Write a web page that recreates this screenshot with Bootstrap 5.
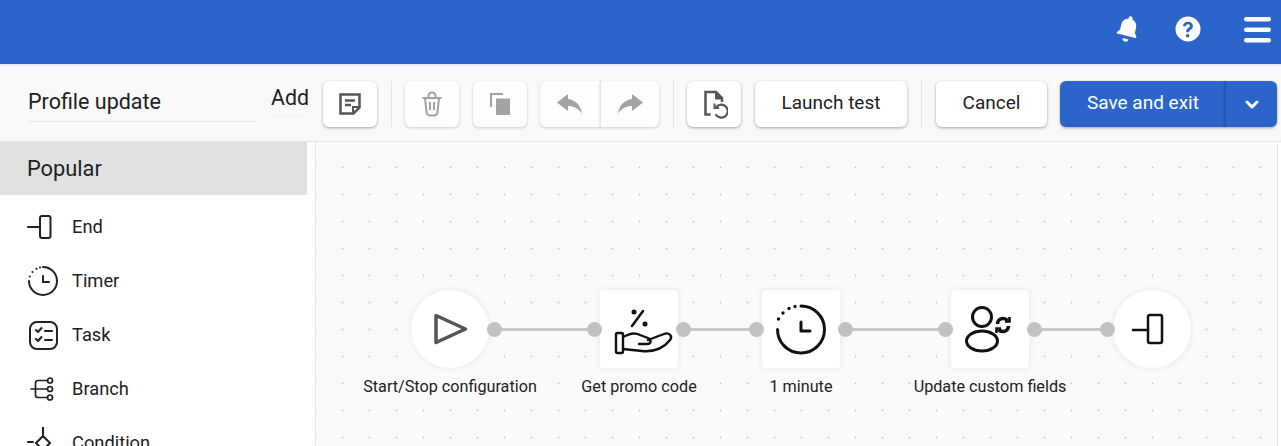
<!doctype html>
<html lang="en">
<head>
    <meta charset="utf-8" />
    <meta content="width=device-width, initial-scale=1" name="viewport" />
    <title>Profile update</title>
    <link href="https://cdn.jsdelivr.net/npm/bootstrap@5.3.0/dist/css/bootstrap.min.css" rel="stylesheet" />
    <style>
        html, body {
            height: 446px;
            overflow: hidden;
        }

        body {
            font-family: Roboto, "Liberation Sans", sans-serif;
            color: #212121;
            background-color: #fff;
        }

        .top-bar {
            height: 66px;
            padding: 0 10px 6px 0;
            background-color: #2b65cb;
            border-bottom: 2px solid #e4edf9;
        }

        .top-icon {
            display: block;
            fill: #fff;
        }

        .bell-icon { margin-right: 34px; }
        .help-icon { margin-right: 43px; }

        .tool-bar {
            height: 76px;
            padding: 15px 4px 14px 28px;
            background-color: #f9f9f9;
            border-bottom: 1px solid #e6e6e6;
        }

        .title-field {
            width: 228px;
            height: 41px;
            margin-right: 15px;
            padding-top: 7px;
            font-size: 21.5px;
            line-height: 28px;
            border-bottom: 1px solid #e8e8e8;
        }

        .add-field {
            width: 37px;
            height: 36px;
            margin-right: 15px;
            font-size: 21.3px;
            line-height: 34px;
            border-bottom: 1px solid #efefef;
        }

        .tool-btn {
            --bs-btn-disabled-border-color: #e6e6e6;
            height: 46px;
            padding: 0 0 1px;
            font-size: 19px;
            color: #212121;
            background-color: #fff;
            border: 0;
            border-radius: 6px;
            box-shadow: 0 1px 3px rgba(0, 0, 0, .35);
            display: flex;
            align-items: center;
            justify-content: center;
        }

        .tool-btn:disabled {
            opacity: 1;
            background-color: #fdfdfd;
            box-shadow: 0 1px 3px rgba(0, 0, 0, .18);
        }

        .icon-btn { width: 54px; padding: 0; }
        .undo-btn { width: 60px; padding: 0; border-radius: 6px 0 0 6px; }
        .redo-btn { width: 59px; padding: 0; border-radius: 0 6px 6px 0; border-left: 1px solid #e6e6e6; }
        .launch-btn { width: 152px; }
        .cancel-btn { width: 111px; }

        .save-btn {
            height: 46px;
            font-size: 19px;
            color: #fff;
            background-color: #2b65cb;
            border: 0;
            box-shadow: 0 1px 3px rgba(0, 0, 0, .35);
        }

        .save-main { width: 166px; padding: 0 0 1px; border-radius: 6px 0 0 6px; }
        .save-arrow { width: 52px; padding: 0; border-radius: 0 6px 6px 0; border-left: 1px solid #2257b3; }

        .tool-gap {
            width: 1px;
            height: 46px;
            background-color: #e4e4e4;
        }

        .gap-14 { margin-right: 14px; }
        .gap-13 { margin-right: 13px; }

        .work-area {
            height: 304px;
        }

        .side-panel {
            width: 316px;
            flex: none;
            padding-right: 8px;
            border-right: 1px solid #e6e6e6;
            overflow: hidden;
        }

        .side-title {
            height: 53px;
            padding-left: 27px;
            font-size: 21.8px;
            line-height: 53px;
            background-color: #e1e1e1;
        }

        .side-list {
            padding-top: 5px;
        }

        .side-item {
            height: 54px;
            padding: 0 0 0 27px;
            font-size: 18.3px;
            color: #212121;
            border: 0;
            background: transparent;
        }

        .side-icon {
            width: 32px;
            height: 32px;
            margin-right: 13px;
            flex: none;
        }

        .flow-canvas {
            position: relative;
            width: 962px;
            background-color: #fafafa;
            background-image: radial-gradient(circle, #bdbdbd .7px, transparent 1.1px);
            background-size: 27px 27px;
            background-position: 13px 12px;
            border-right: 1px solid #e6e6e6;
        }

        .flow-step {
            position: absolute;
            top: 148px;
            width: 78px;
        }

        .step-start { left: 95px; }
        .step-promo { left: 284px; }
        .step-timer { left: 446px; }
        .step-update { left: 635px; }
        .step-end { left: 797px; }

        .step-box {
            width: 78px;
            height: 78px;
            background-color: #fff;
            border-radius: 4px;
            box-shadow: 0 0 4px 2px #efefef;
        }

        .step-round { border-radius: 50%; }

        .step-label {
            margin-top: 9px;
            padding: 0 2px;
            font-size: 16.2px;
            line-height: 20px;
            white-space: nowrap;
            background-color: #fafafa;
        }

        .flow-port {
            position: absolute;
            top: 180px;
            width: 15px;
            height: 15px;
            border-radius: 50%;
            background-color: #c2c2c2;
        }

        .port-a { left: 171px; }
        .port-b { left: 271px; }
        .port-c { left: 360px; }
        .port-d { left: 433px; }
        .port-e { left: 522px; }
        .port-f { left: 622px; }
        .port-g { left: 711px; }
        .port-h { left: 784px; }

        .flow-link {
            position: absolute;
            top: 186px;
            height: 3px;
            background-color: #c9c9c9;
        }

        .link-a { left: 180px; width: 96px; }
        .link-b { left: 369px; width: 70px; }
        .link-c { left: 531px; width: 96px; }
        .link-d { left: 720px; width: 70px; }
    </style>
</head>
<body>

<nav class="top-bar d-flex align-items-center justify-content-end">
    <svg class="top-icon bell-icon" width="26" height="28" viewBox="0 0 26 28">
        <path transform="rotate(14 13 14)" d="M13 1c1.200 0 2 .9 2 2v.8c3.600 1 5.600 4 5.600 7.600v4.800l2.400 3.300c.4.600 0 1.500-.8 1.500H3.800c-.8 0-1.200-.9-.8-1.500l2.400-3.300v-4.800c0-3.600 2-6.600 5.600-7.600V3c0-1.100.8-2 2-2zM10 24h6c0 1.700-1.300 3-3 3s-3-1.300-3-3z"/>
    </svg>
    <svg class="top-icon help-icon" width="26" height="26" viewBox="0 0 26 26">
        <path fill-rule="evenodd" d="M13 .5a12.500 12.500 0 1 0 0 25 12.500 12.500 0 0 0 0-25zm-.1 5.200c3 0 5 1.700 5 4.200 0 2.100-1.200 3-2.400 3.800-1 .7-1.400 1.100-1.400 2.100v.5h-2.900v-.8c0-1.800.8-2.700 2-3.500 1-.7 1.700-1.200 1.700-2.200s-.7-1.600-1.900-1.600c-1.300 0-2 .8-2.100 2H8c.1-2.800 2-4.500 4.900-4.500zM12.600 18a1.800 1.800 0 1 1 0 3.600 1.800 1.800 0 0 1 0-3.600z"/>
    </svg>
    <svg class="top-icon" width="27" height="28" viewBox="0 0 27 28">
        <rect y="2" width="27" height="4.500" rx="2.200"/>
        <rect y="12.500" width="27" height="4.500" rx="2.200"/>
        <rect y="23" width="27" height="4.500" rx="2.200"/>
    </svg>
</nav>

<div class="tool-bar d-flex align-items-start">
    <div class="title-field">Profile update</div>
    <div class="add-field">Add</div>
    <button class="btn tool-btn icon-btn gap-14" type="button">
        <svg width="24" height="24" viewBox="0 0 24 24" fill="none" stroke="#555" stroke-width="2.500">
            <path d="M2.500 2.500h19v13l-6 6h-13z"/>
            <path d="M7 8.500h10M7 13h6"/>
            <path d="M15 21v-6h6" stroke-width="2"/>
        </svg>
    </button>
    <span class="tool-gap gap-13"></span>
    <button class="btn tool-btn icon-btn gap-14" type="button" disabled>
        <svg width="22" height="26" viewBox="0 0 22 26" fill="none" stroke="#a3a3a3" stroke-width="2">
            <path d="M1.500 7h19M4 7l1.500 14c.2 2 1.500 3.500 3.500 3.500h4c2 0 3.300-1.500 3.500-3.500L18 7"/>
            <path d="M7.500 7V4.500c0-1.500 1.500-3 3.500-3s3.500 1.500 3.500 3V7"/>
            <path d="M9 11v8M13 11v8"/>
        </svg>
    </button>
    <button class="btn tool-btn icon-btn gap-13" type="button" disabled>
        <svg width="20" height="22" viewBox="0 0 20 22">
            <path fill="#a3a3a3" d="M6 5.500h14V22H6z"/>
            <path fill="none" stroke="#a3a3a3" stroke-width="2" d="M1 14V1h12"/>
        </svg>
    </button>
    <div class="d-flex gap-14">
        <button class="btn tool-btn undo-btn" type="button" disabled>
            <svg width="26" height="20" viewBox="0 0 26 20">
                <path fill="#a3a3a3" d="M11 0 0 8.500 11 17v-5c6 0 10.500 2.500 14 7.500C24 12 19 6 11 5z"/>
            </svg>
        </button>
        <button class="btn tool-btn redo-btn" type="button" disabled>
            <svg width="26" height="20" viewBox="0 0 26 20">
                <path fill="#a3a3a3" d="M15 0l11 8.500L15 17v-5C9 12 4.500 14.500 1 19.500 2 12 7 6 15 5z"/>
            </svg>
        </button>
    </div>
    <span class="tool-gap gap-13"></span>
    <button class="btn tool-btn icon-btn gap-14" type="button">
        <svg width="28" height="30" viewBox="0 0 28 30" fill="none" stroke="#555" stroke-width="2.500">
            <g transform="translate(2 1)">
                <path d="M8.500 24.500H3.500V2h10.500l6 6v4"/>
                <path d="M13.500 2v7h6.500z" fill="#555" stroke-width="1"/>
                <path d="M14 17.200a6.500 6.500 0 1 1-.5 7" stroke-width="2.200"/>
                <path d="M12.500 13.500v4.500h4.500" stroke-width="2"/>
            </g>
        </svg>
    </button>
    <button class="btn tool-btn launch-btn gap-14" type="button">Launch test</button>
    <span class="tool-gap gap-14"></span>
    <button class="btn tool-btn cancel-btn gap-13" type="button">Cancel</button>
    <div class="btn-group">
        <button class="btn save-btn save-main" type="button">Save and exit</button>
        <button class="btn save-btn save-arrow" type="button">
            <svg width="14" height="10" viewBox="0 0 14 10" fill="none" stroke="#fff" stroke-width="3" stroke-linecap="round" stroke-linejoin="round">
                <path d="M2 2l5 5 5-5"/>
            </svg>
        </button>
    </div>
</div>

<div class="work-area d-flex">
    <aside class="side-panel">
        <div class="side-title">Popular</div>
        <div class="list-group list-group-flush side-list">
            <div class="list-group-item side-item d-flex align-items-center">
                <svg class="side-icon" viewBox="0 0 32 32" fill="none" stroke="#212121" stroke-width="2" stroke-linecap="round">
                    <path d="M1 16h12"/>
                    <rect x="13" y="5" width="10.500" height="22" rx="2"/>
                </svg>
                End
            </div>
            <div class="list-group-item side-item d-flex align-items-center">
                <svg class="side-icon" viewBox="0 0 32 32" fill="none" stroke="#212121" stroke-width="2" stroke-linecap="round">
                    <path d="M16 2a14 14 0 1 1-14 14"/>
                    <path d="M2.800 11.500v0M5.500 7v0M9.500 3.800v0M13 2.500v0" stroke-width="2.200"/>
                    <path d="M16 11v6h6"/>
                </svg>
                Timer
            </div>
            <div class="list-group-item side-item d-flex align-items-center">
                <svg class="side-icon" viewBox="0 0 32 32" fill="none" stroke="#212121" stroke-width="2" stroke-linecap="round" stroke-linejoin="round">
                    <rect x="3" y="3" width="27" height="27" rx="7"/>
                    <path d="M9 11l2 2 3.500-4M9 20l2 2 3.500-4M18 12h7M18 21h7"/>
                </svg>
                Task
            </div>
            <div class="list-group-item side-item d-flex align-items-center">
                <svg class="side-icon" viewBox="0 0 32 32" fill="none" stroke="#212121" stroke-width="1.700" stroke-linecap="round">
                    <path d="M4 16h16M20.500 7.500h-9.500c-1.500 0-2.500 1-2.500 2.500v12c0 1.500 1 2.500 2.500 2.500h9.500"/>
                    <circle cx="23" cy="7.500" r="2.500"/>
                    <circle cx="23" cy="16" r="2.500"/>
                    <circle cx="23" cy="24.500" r="2.500"/>
                </svg>
                Branch
            </div>
            <div class="list-group-item side-item d-flex align-items-center">
                <svg class="side-icon" viewBox="0 0 32 32" fill="none" stroke="#212121" stroke-width="2" stroke-linecap="round" stroke-linejoin="round">
                    <path d="M16 0v9M16 9l7 7-7 7-7-7zM1 15h5"/>
                </svg>
                Condition
            </div>
        </div>
    </aside>

    <main class="flow-canvas flex-grow-0">
        <span class="flow-link link-a"></span>
        <span class="flow-link link-b"></span>
        <span class="flow-link link-c"></span>
        <span class="flow-link link-d"></span>

        <div class="flow-step step-start d-flex flex-column align-items-center">
            <div class="step-box step-round">
                <svg width="78" height="78" viewBox="0 0 78 78" fill="none" stroke="#555" stroke-width="3.500" stroke-linejoin="round">
                    <path d="M25 25.500 54.500 39 25 52.500z"/>
                </svg>
            </div>
            <div class="step-label">Start/Stop configuration</div>
        </div>

        <div class="flow-step step-promo d-flex flex-column align-items-center">
            <div class="step-box">
                <svg width="78" height="78" viewBox="0 0 78 78" fill="none" stroke="#111" stroke-width="2.400" stroke-linecap="round" stroke-linejoin="round">
                    <circle cx="34" cy="22" r="2.500" fill="#111" stroke="none"/>
                    <circle cx="45" cy="34" r="2.500" fill="#111" stroke="none"/>
                    <path d="M32 36 43 21" stroke-width="2.500"/>
                    <rect x="16" y="43" width="7" height="20" rx="1.500"/>
                    <path d="M23 47c6-3 11-5 17-2l8 3c4 2 3 6-1 6h-8"/>
                    <path d="M48 50l16-6c5-2 9 2 6 6-7 9-17 12-28 11l-19-2"/>
                </svg>
            </div>
            <div class="step-label">Get promo code</div>
        </div>

        <div class="flow-step step-timer d-flex flex-column align-items-center">
            <div class="step-box">
                <svg width="78" height="78" viewBox="0 0 78 78" fill="none" stroke="#111" stroke-width="3" stroke-linecap="round" stroke-linejoin="round">
                    <path d="M39 16a23.500 23.500 0 1 1-23.500 23.500"/>
                    <path d="M16.500 29v0M21 23v0M27 18.500v0M33 16.500v0" stroke-width="3.400"/>
                    <path d="M39 32v9h9"/>
                </svg>
            </div>
            <div class="step-label">1 minute</div>
        </div>

        <div class="flow-step step-update d-flex flex-column align-items-center">
            <div class="step-box">
                <svg width="78" height="78" viewBox="0 0 78 78" fill="none" stroke="#111" stroke-width="3">
                    <circle cx="31" cy="27" r="9.500"/>
                    <ellipse cx="31" cy="51" rx="15.500" ry="10"/>
                    <path d="M46.500 34c0-3 2.500-5.500 5.500-5.500 2 0 3.500.8 4.500 2M57.500 36c0 3-2.500 5.500-5.500 5.500-2 0-3.500-.8-4.500-2" stroke-width="3.600"/>
                    <path d="M54 31.500h4.500V27M50 38.500h-4.500V43" stroke-width="2.600"/>
                </svg>
            </div>
            <div class="step-label">Update custom fields</div>
        </div>

        <div class="flow-step step-end d-flex flex-column align-items-center">
            <div class="step-box step-round">
                <svg width="78" height="78" viewBox="0 0 78 78" fill="none" stroke="#111" stroke-width="2.500" stroke-linecap="round">
                    <path d="M20 40h15"/>
                    <rect x="35" y="25" width="14" height="28" rx="2"/>
                </svg>
            </div>
        </div>

        <span class="flow-port port-a"></span>
        <span class="flow-port port-b"></span>
        <span class="flow-port port-c"></span>
        <span class="flow-port port-d"></span>
        <span class="flow-port port-e"></span>
        <span class="flow-port port-f"></span>
        <span class="flow-port port-g"></span>
        <span class="flow-port port-h"></span>
    </main>
</div>

<script src="https://cdn.jsdelivr.net/npm/bootstrap@5.3.0/dist/js/bootstrap.bundle.min.js"></script>
</body>
</html>
